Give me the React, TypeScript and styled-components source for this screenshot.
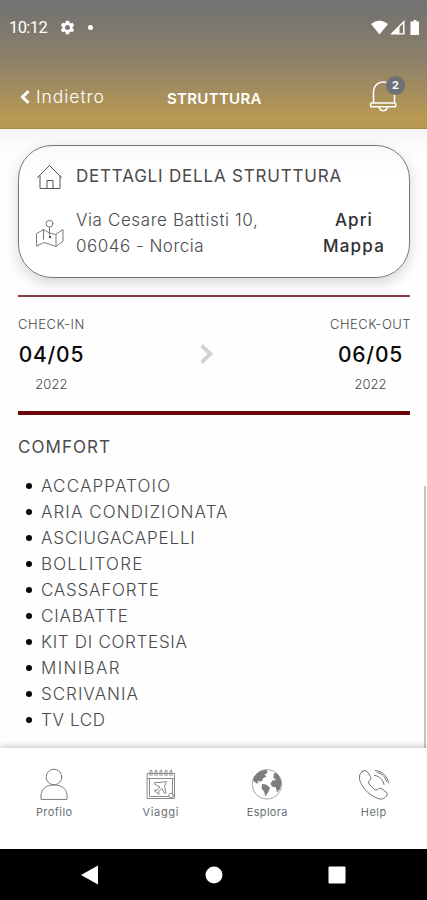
import React from 'react';
import styled, { createGlobalStyle } from 'styled-components';
import { MdSettings } from 'react-icons/md';

const GlobalStyle = createGlobalStyle`
  * { box-sizing: border-box; }
  body { margin: 0; background: #fff; font-family: Inter, "Open Sans", sans-serif; color: #4a4a4c; }
`;

const Screen = styled.div`
  display: flex;
  flex-direction: column;
  width: 427px;
  height: 900px;
  overflow: hidden;
  background: #fefefe;
`;

const Header = styled.header`
  height: 129px;
  flex: none;
  display: flex;
  flex-direction: column;
  color: #fff;
  background: linear-gradient(180deg, #737373 0%, #78756f 14%, #8b806a 45%, #a58e5e 72%, #b99a52 92%, #b89952 100%);
  border-bottom: 1px solid #ab8b42;
`;

const StatusBar = styled.div`
  height: 54px;
  padding: 0 6px 0 9px;
  display: flex;
  align-items: center;
  justify-content: space-between;
`;

const StatusGroup = styled.div<{ $gap: number }>`
  display: flex;
  align-items: center;
  gap: ${(p) => p.$gap}px;
  svg { display: block; }
`;

const Clock = styled.span`
  font: 400 16.5px/20px Roboto, sans-serif;
  letter-spacing: -0.6px;
  margin-top: 2px;
  margin-right: -1px;
`;

const Dot = styled.i`
  width: 5px;
  height: 5px;
  border-radius: 50%;
  background: #fff;
`;

const TitleBar = styled.div`
  height: 74px;
  padding: 0 21px 0 20px;
  display: grid;
  grid-template-columns: 147px 1fr 38px;
  align-items: start;
`;

const Back = styled.a`
  display: flex;
  align-items: center;
  gap: 6px;
  padding-top: 32px;
`;

const Text = styled.span<{ $size?: number; $weight?: number; $ls?: number; $color?: string; $line?: number }>`
  display: block;
  white-space: nowrap;
  font-size: ${(p) => p.$size ?? 17}px;
  font-weight: ${(p) => p.$weight ?? 300};
  letter-spacing: ${(p) => p.$ls ?? 0}px;
  line-height: ${(p) => p.$line ?? 26}px;
  color: ${(p) => p.$color ?? 'inherit'};
`;

const Title = styled.h1`
  margin: 35px 0 0;
  font-size: 15px;
  line-height: 20px;
  font-weight: 600;
  letter-spacing: 0.3px;
`;

const Bell = styled.div`
  position: relative;
  width: 38px;
  height: 40px;
  margin-top: 20px;
  svg { display: block; }
`;

const Badge = styled.span`
  position: absolute;
  top: 2px;
  right: 1px;
  width: 19px;
  height: 19px;
  border-radius: 50%;
  background: #6d7075;
  font-size: 11px;
  font-weight: 700;
  line-height: 19px;
  text-align: center;
`;

const Main = styled.main`
  position: relative;
  flex: 1;
  padding: 16px 17px 0 18px;
  background: linear-gradient(180deg, #f5f5f6 0, #fdfdfd 20px, #fefefe 60px);
`;

const Card = styled.section`
  height: 133px;
  border: 1px solid #777;
  border-radius: 34px;
  background: linear-gradient(180deg, #fafafa, #fff 34px);
  box-shadow: 0 5px 14px rgba(0, 0, 0, 0.16);
  padding: 17px 18px 0 17px;
  display: flex;
  flex-direction: column;
  gap: 17px;
`;

const CardRow = styled.div<{ $iconDrop?: number }>`
  display: grid;
  grid-template-columns: 40px 1fr auto;
  height: 27px;
  > svg { display: block; margin-top: ${(p) => p.$iconDrop ?? 0}px; }
`;

const MapLink = styled.a`
  display: flex;
  flex-direction: column;
  align-items: center;
  margin-right: 6px;
`;

const Stay = styled.section`
  margin-top: 17px;
  height: 120px;
  border-top: 2px solid #873c43;
  border-bottom: 4px solid #6b0509;
  display: grid;
  grid-template-columns: 1fr 14px 1fr;
  padding-top: 17px;
`;

const StayDay = styled.div<{ $end?: boolean }>`
  justify-self: ${(p) => (p.$end ? 'end' : 'start')};
  display: flex;
  flex-direction: column;
  align-items: center;
  margin-right: ${(p) => (p.$end ? -1 : 0)}px;
`;

const Arrow = styled.svg`
  margin-top: 30px;
  margin-left: -7px;
`;

const ComfortTitle = styled.h2`
  margin: 19px 0 13px;
  font-size: 17px;
  line-height: 26px;
  font-weight: 400;
  letter-spacing: 1.05px;
  color: #4c4c4e;
`;

const ComfortList = styled.ul`
  margin: 0;
  padding: 0;
  list-style: none;
`;

const ComfortItem = styled.li`
  display: flex;
  align-items: center;
  gap: 9px;
  padding-left: 8px;
  &::before {
    content: '';
    width: 6px;
    height: 6px;
    border-radius: 50%;
    background: #050505;
  }
`;

const ScrollThumb = styled.div`
  position: absolute;
  top: 357px;
  right: 1px;
  width: 2px;
  height: 262px;
  background: #c4c4c4;
`;

const Tabs = styled.nav`
  position: relative;
  height: 101px;
  flex: none;
  display: grid;
  grid-template-columns: repeat(4, 1fr);
  padding-left: 1px;
  background: #fff;
  box-shadow: 0 -2px 6px rgba(0, 0, 0, 0.2);
`;

const Tab = styled.a`
  display: flex;
  flex-direction: column;
  align-items: center;
  padding-top: 20px;
  gap: 4px;
  svg { display: block; }
`;

const SystemBar = styled.div`
  height: 51px;
  flex: none;
  display: flex;
  align-items: center;
  background: #000;
  justify-content: space-between;
  padding: 0 81px;
  svg { display: block; }
`;

const amenities: { name: string; spacing: number }[] = [
  { name: 'ACCAPPATOIO', spacing: 1.16 },
  { name: 'ARIA CONDIZIONATA', spacing: 1.07 },
  { name: 'ASCIUGACAPELLI', spacing: 0.85 },
  { name: 'BOLLITORE', spacing: 1.2 },
  { name: 'CASSAFORTE', spacing: 0.75 },
  { name: 'CIABATTE', spacing: 0.82 },
  { name: 'KIT DI CORTESIA', spacing: 0.7 },
  { name: 'MINIBAR', spacing: 1.35 },
  { name: 'SCRIVANIA', spacing: 1 },
  { name: 'TV LCD', spacing: 0.65 },
];

const line = { fill: 'none', stroke: '#7b7b7d', strokeWidth: 1, strokeLinejoin: 'round', strokeLinecap: 'round' } as const;

const BellIcon = () => (
  <svg width="30" height="40" viewBox="0 0 30 40" fill="none" stroke="#fff" strokeWidth="1.5">
    <path d="M5.500 29V18.500C5.500 11.500 10 8 15.500 8S26.500 11.500 26.500 18.500V29" />
    <rect x="2.700" y="29" width="25" height="3.800" rx="0.800" />
    <path d="M11 33q1 3.700 4.300 3.700T19.600 33" />
  </svg>
);

const HouseIcon = () => (
  <svg width="28" height="28" viewBox="0 0 28 28" {...line} stroke="#555">
    <path d="M1.500 14.500 13.500 2.500l12 12M4 13v12.500h20V13M11 25.500v-8h6v8" />
  </svg>
);

const MapIcon = () => (
  <svg width="30" height="30" viewBox="0 0 30 30" {...line}>
    <path d="M.800 14.500 7.500 10.500l6 3.500 6 1.500 7.500-5v11.700L20 27.500 8 23.500 1 27zM7.500 10.500V20.500M20 15.500v12" />
    <circle cx="13.500" cy="4.700" r="3.400" />
    <path d="M13.500 8v8" />
    <circle cx="14" cy="18" r="1.200" fill="#444" stroke="none" />
  </svg>
);

const ProfileIcon = () => (
  <svg width="32" height="32" viewBox="0 0 32 32" {...line}>
    <circle cx="16" cy="9" r="7.800" />
    <path d="M3 31V28C3 21 8 17 16 17s13 4 13 11v3z" />
  </svg>
);

const CalendarIcon = () => (
  <svg width="32" height="32" viewBox="0 0 32 32" {...line} stroke="#8a8a8c">
    <path d="M2.500 5.500h27v25h-27zM2.500 10.500h27M4.500 10.500v18h23V10.500" />
    <path d="M5 7.500V3q1.500-2 2 0v4.500M10 7.500V3q1.500-2 2 0v4.500M15 7.500V3q1.500-2 2 0v4.500M20 7.500V3q1.500-2 2 0v4.500M25 7.500V3q1.500-2 2 0v4.500" />
    <path d="M10 14.500h5l6.500-1-2 5 1.500 6.500-1.500.5-2.500-5-3.500 3 .5 3-3-2.500-2-1.500 3-.5 3-3-5-2.500z" />
    <circle cx="26" cy="27.500" r="2.300" fill="#fff" />
  </svg>
);

const GlobeIcon = () => (
  <svg width="32" height="32" viewBox="0 0 32 32">
    <circle cx="16" cy="16.300" r="14.800" fill="#fff" stroke="#a6a6a6" />
    <g fill="#7d7d7f">
      <path d="M3 9Q8 1.500 16 2l.500 3-3 1.500 2 2-3 1.500-2 3.500-4-.5 1 2-2 .5-3.500-3z" />
      <path d="m11 16 4 .5 4 3-1.500 4-3 5-1.500-5-2.500-3z" />
      <path d="m23 5 3 .5Q29.500 9 30.500 15l-1.500 6-3 3.500-1-5-4-1-1.500-3 2-3 4-.5-3-2z" />
    </g>
  </svg>
);

const PhoneIcon = () => (
  <svg width="32" height="32" viewBox="0 0 32 32" {...line} stroke="#737375">
    <path d="M4 3.500Q7.500 1 9.500 4l3 4.500q1.500 2.500-1 4-2 1.500-.500 3.500l5 5q2 2 3.500.500 2-2.500 4.500-.500l4 3q2.500 2 .5 4-3.500 4.500-8.500 2.500C11 27 4 20 1.500 11.500Q.5 6.500 4 3.500z" />
    <path d="M17.500 2.500c6.500.5 12 5.500 13 12.500M16.500 7.500c5 .5 8.500 4 9.500 9M19 4.500c5 1 8 4 9.500 9" />
  </svg>
);

const tabs = [
  { label: 'Profilo', spacing: 0.45, icon: <ProfileIcon /> },
  { label: 'Viaggi', spacing: 0.65, icon: <CalendarIcon /> },
  { label: 'Esplora', spacing: 0.3, icon: <GlobeIcon /> },
  { label: 'Help', spacing: 0.5, icon: <PhoneIcon /> },
];

export default function App() {
  return (
    <Screen>
      <GlobalStyle />
      <Header>
        <StatusBar>
          <StatusGroup $gap={12.5}>
            <Clock>10:12</Clock>
            <MdSettings size={17} />
            <Dot />
          </StatusGroup>
          <StatusGroup $gap={2}>
            <svg width="17" height="15" viewBox="0 0 17 15" fill="#fff">
              <path d="M0 4Q8.500-3 17 4L8.500 14.500z" />
            </svg>
            <svg width="15" height="15" viewBox="0 0 15 15" fill="#fff">
              <path d="M14.500 0v14.500H0zM9.500 7v6.200h3.500V3.800z" fillRule="evenodd" />
            </svg>
            <svg width="14" height="15" viewBox="0 0 14 15" fill="#fff">
              <path d="M6.500 0h3v1.500h2.500V15H3.500V1.500h3z" />
            </svg>
          </StatusGroup>
        </StatusBar>
        <TitleBar>
          <Back>
            <svg width="10" height="14" viewBox="0 0 10 14" fill="none" stroke="#fff" strokeWidth="3">
              <path d="M8.500 1.200 2.500 7l6 5.800" />
            </svg>
            <Text $size={17.5} $ls={0.95} $line={22}>Indietro</Text>
          </Back>
          <Title>STRUTTURA</Title>
          <Bell>
            <BellIcon />
            <Badge>2</Badge>
          </Bell>
        </TitleBar>
      </Header>

      <Main>
        <Card>
          <CardRow>
            <HouseIcon />
            <Text $weight={400} $ls={0.8}>DETTAGLI DELLA STRUTTURA</Text>
          </CardRow>
          <CardRow $iconDrop={12}>
            <MapIcon />
            <div>
              <Text $ls={0.6}>Via Cesare Battisti 10,</Text>
              <Text $ls={0.5}>06046 - Norcia</Text>
            </div>
            <MapLink>
              <Text $weight={500} $ls={1.1} $color="#303032">Apri</Text>
              <Text $weight={500} $ls={1.2} $color="#303032">Mappa</Text>
            </MapLink>
          </CardRow>
        </Card>

        <Stay>
          <StayDay>
            <Text $size={13} $ls={0.55} $line={20}>CHECK-IN</Text>
            <Text $size={21} $weight={500} $ls={0.77} $line={41} $color="#0a0a0a">04/05</Text>
            <Text $size={13} $ls={0.05} $line={18}>2022</Text>
          </StayDay>
          <Arrow width="14" height="20" viewBox="0 0 14 20" fill="none" stroke="#d2d2d2" strokeWidth="3.800">
            <path d="m1.500 1.500 9 8.500-9 8.500" />
          </Arrow>
          <StayDay $end>
            <Text $size={13} $ls={0.45} $line={20}>CHECK-OUT</Text>
            <Text $size={21} $weight={500} $ls={0.8} $line={41} $color="#0a0a0a">06/05</Text>
            <Text $size={13} $ls={0.05} $line={18}>2022</Text>
          </StayDay>
        </Stay>

        <ComfortTitle>COMFORT</ComfortTitle>
        <ComfortList>
          {amenities.map((a) => (
            <ComfortItem key={a.name}>
              <Text $ls={a.spacing}>{a.name}</Text>
            </ComfortItem>
          ))}
        </ComfortList>
        <ScrollThumb />
      </Main>

      <Tabs>
        {tabs.map((t) => (
          <Tab key={t.label}>
            {t.icon}
            <Text $size={11} $weight={400} $ls={t.spacing} $line={16} $color="#6a7074">{t.label}</Text>
          </Tab>
        ))}
      </Tabs>

      <SystemBar>
        <svg width="18" height="20" viewBox="0 0 18 20" fill="#fff"><path d="M0 10 17 .5v19z" /></svg>
        <svg width="18" height="18" viewBox="0 0 18 18" fill="#fff"><circle cx="9" cy="9" r="8.500" /></svg>
        <svg width="18" height="18" viewBox="0 0 18 18" fill="#fff"><rect x=".5" y=".5" width="17" height="17" rx="1" /></svg>
      </SystemBar>
    </Screen>
  );
}
